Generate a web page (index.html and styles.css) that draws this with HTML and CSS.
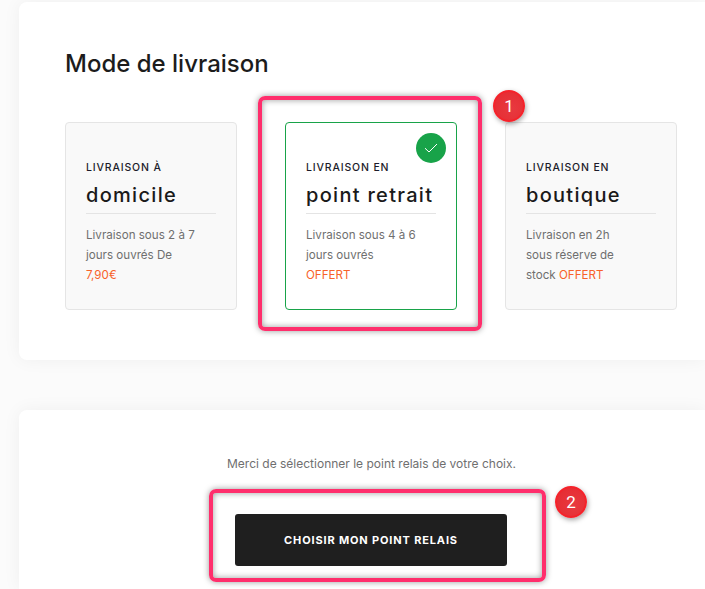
FILE: index.html
```html
<!DOCTYPE html>
<html lang="fr">
<head>
<meta charset="utf-8">
<title>Mode de livraison</title>
<link rel="stylesheet" href="styles.css">
</head>
<body>
<main class="page">
  <section class="panel panel-modes">
    <h1 class="title">Mode de livraison</h1>
    <div class="options">
      <article class="option">
        <p class="kicker">LIVRAISON À</p>
        <h2 class="name">domicile</h2>
        <p class="desc">Livraison sous 2 à 7<br>jours ouvrés De<br><span class="price">7,90€</span></p>
      </article>
      <article class="option option-selected">
        <span class="check">
          <svg width="16" height="16" viewBox="0 0 16 16" fill="none"><path d="M2 8.2 6 12 14 4" stroke="#fff" stroke-width="1"/></svg>
        </span>
        <p class="kicker">LIVRAISON EN</p>
        <h2 class="name">point retrait</h2>
        <p class="desc">Livraison sous 4 à 6<br>jours ouvrés<br><span class="price">OFFERT</span></p>
      </article>
      <article class="option">
        <p class="kicker">LIVRAISON EN</p>
        <h2 class="name">boutique</h2>
        <p class="desc">Livraison en 2h<br>sous réserve de<br>stock <span class="price">OFFERT</span></p>
      </article>
    </div>
  </section>
  <section class="panel panel-relay">
    <p class="relay-text">Merci de sélectionner le point relais de votre choix.</p>
    <button class="relay-btn" type="button">CHOISIR MON POINT RELAIS</button>
  </section>
</main>
<div class="mark mark-one"></div>
<div class="mark mark-two"></div>
<div class="badge badge-one">1</div>
<div class="badge badge-two">2</div>
</body>
</html>
```
FILE: styles.css
```css
* { box-sizing: border-box; }
html, body { margin: 0; height: 100%; }
body {
  position: relative;
  width: 705px;
  height: 589px;
  overflow: hidden;
  background: #fbfbfb;
  font-family: "Inter", "Noto Sans", sans-serif;
  color: #1a1a1a;
}
.page {
  padding: 2px 0 0 19px;
  display: flex;
  flex-direction: column;
  gap: 50px;
  width: 705px;
}
.panel {
  background: #fff;
  box-shadow: 0 0 18px rgba(0, 0, 0, 0.05);
}
.panel-modes {
  height: 358px;
  padding: 47px 0 0 46px;
  border-radius: 8px 0 0 8px;
}
.title {
  margin: 0;
  font-size: 24px;
  line-height: 30px;
  font-weight: 500;
  letter-spacing: 0;
  color: #1c1c1c;
}
.options {
  display: flex;
  gap: 48px;
  margin-top: 43px;
}
.option {
  position: relative;
  width: 172px;
  height: 188px;
  padding: 37px 20px 0;
  background: #f9f9f9;
  border: 1px solid #e5e5e5;
  border-radius: 4px;
}
.option-selected {
  background: #fff;
  border-color: #18a349;
}
.check {
  position: absolute;
  top: 10px;
  right: 10px;
  width: 30px;
  height: 30px;
  border-radius: 50%;
  background: #18a349;
  display: flex;
  align-items: center;
  justify-content: center;
}
.kicker {
  margin: 0;
  font-size: 10.5px;
  line-height: 16px;
  font-weight: 500;
  letter-spacing: 0.85px;
  color: #1c1c2a;
}
.name {
  margin: 4px 0 0;
  padding-bottom: 4px;
  height: 34px;
  font-size: 20px;
  line-height: 30px;
  font-weight: 500;
  letter-spacing: 1.3px;
  color: #1a1a1a;
  border-bottom: 1px solid #e4e4e4;
  white-space: nowrap;
}
.desc {
  margin: 11px 0 0;
  font-size: 11.6px;
  line-height: 20px;
  color: #6f6f6f;
}
.price { color: #f8622a; }
.panel-relay {
  height: 179px;
  border-radius: 8px 0 0 0;
  display: flex;
  flex-direction: column;
  align-items: flex-start;
  padding: 45px 0 0 208px;
}
.relay-text {
  margin: 0;
  font-size: 12px;
  line-height: 18px;
  color: #6f6f6f;
}
.relay-btn {
  margin: 41px 0 0 8px;
  width: 272px;
  height: 52px;
  border: 0;
  border-radius: 3px;
  background: #1f1f1f;
  color: #fff;
  font-family: inherit;
  font-size: 11px;
  font-weight: 700;
  letter-spacing: 0.85px;
}
.mark {
  position: absolute;
  border: 4px solid #ff2e6c;
  border-radius: 7px;
  box-shadow: 0 0 6px rgba(0, 0, 0, 0.4), inset 0 0 6px rgba(0, 0, 0, 0.4);
}
.mark-one { left: 258px; top: 96px; width: 224px; height: 235px; }
.mark-two { left: 209px; top: 489px; width: 337px; height: 93px; }
.badge {
  position: absolute;
  width: 32px;
  height: 32px;
  border-radius: 50%;
  background: radial-gradient(circle at 60% 60%, #e8393f, #e52a30);
  border: 2px solid #f5222a;
  box-shadow: 1px 2px 5px rgba(0, 0, 0, 0.35);
  color: #fff;
  font-family: "Roboto", sans-serif;
  font-size: 17px;
  line-height: 28px;
  text-align: center;
}
.badge-one { left: 493px; top: 90px; }
.badge-two { left: 555px; top: 486px; }
```
